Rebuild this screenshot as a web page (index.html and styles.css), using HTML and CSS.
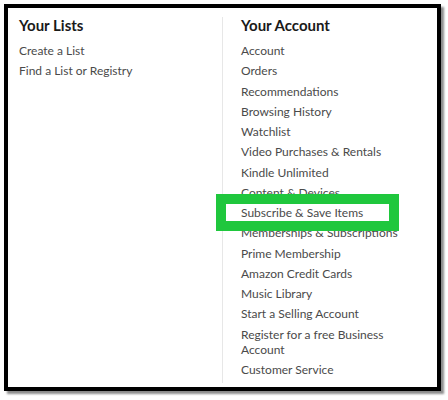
FILE: index.html
```html
<!DOCTYPE html>
<html>
<head>
<meta charset="utf-8">
<link rel="stylesheet" href="styles.css">
</head>
<body>
<div class="frame">
  <div class="columns">
    <div class="col col-left">
      <h2 class="heading">Your Lists</h2>
      <ul class="links">
        <li>Create a List</li>
        <li>Find a List or Registry</li>
      </ul>
    </div>
    <div class="col col-right">
      <h2 class="heading">Your Account</h2>
      <ul class="links">
        <li>Account</li>
        <li>Orders</li>
        <li>Recommendations</li>
        <li>Browsing History</li>
        <li>Watchlist</li>
        <li>Video Purchases &amp; Rentals</li>
        <li>Kindle Unlimited</li>
        <li>Content &amp; Devices</li>
        <li>Subscribe &amp; Save Items</li>
        <li>Memberships &amp; Subscriptions</li>
        <li>Prime Membership</li>
        <li>Amazon Credit Cards</li>
        <li>Music Library</li>
        <li>Start a Selling Account</li>
        <li>Register for a free Business Account</li>
        <li>Customer Service</li>
      </ul>
    </div>
  </div>
  <div class="highlight"></div>
</div>
</body>
</html>
```
FILE: styles.css
```css
html, body {
  margin: 0;
  padding: 0;
  background: #fff;
}
body {
  font-family: Lato, "Open Sans", sans-serif;
  width: 448px;
  height: 400px;
}
.frame {
  position: relative;
  box-sizing: border-box;
  margin: 4px 0 0 4px;
  width: 437px;
  height: 387px;
  border: 4px solid #000;
  background: #fff;
  box-shadow: 3px 3px 2px rgba(0,0,0,0.45);
}
.columns {
  display: flex;
  padding: 9px 0 0 11px;
}
.col-left {
  width: 203px;
}
.col-right {
  border-left: 1px solid #e7e7e7;
  padding: 0 0 6px 18px;
  width: 175px;
}
.heading {
  margin: 0;
  font-size: 15px;
  line-height: 16px;
  font-weight: 700;
  color: #1a1a1a;
}
.links {
  list-style: none;
  margin: 10px 0 0;
  padding: 0;
}
.links li {
  font-size: 12px;
  line-height: 15px;
  color: #4a4a4a;
  margin-bottom: 5.27px;
}
.links li:last-child {
  margin-bottom: 0;
}
.highlight {
  position: absolute;
  left: 208px;
  top: 186px;
  width: 163px;
  height: 17px;
  border: 10px solid #1fc73d;
}
```
